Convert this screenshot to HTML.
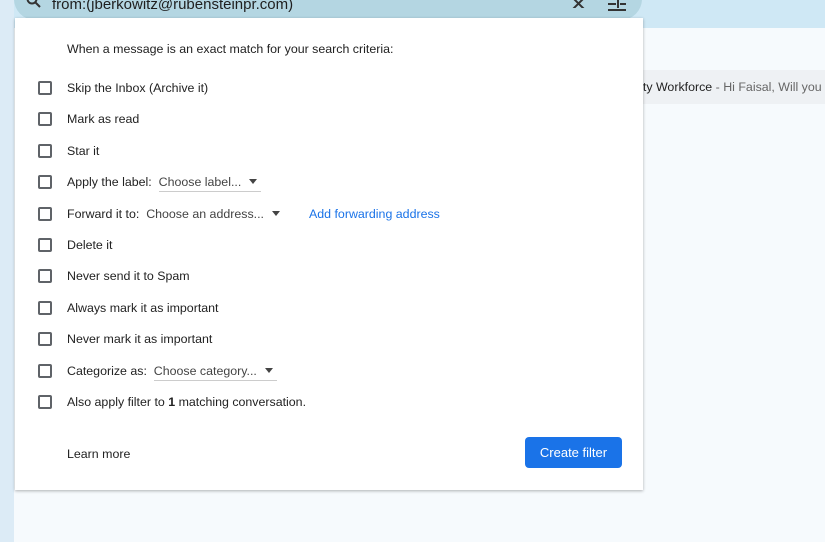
<!DOCTYPE html><html><head><style>
body{margin:0;width:825px;height:542px;overflow:hidden;position:relative;background:#f6fafd;font-family:"Liberation Sans",sans-serif;font-size:12.4px;color:#222}
.top{position:absolute;left:0;top:0;width:825px;height:28px;background:#cfe8f5}
.strip{position:absolute;left:0;top:0;width:14px;height:542px;background:#dcebf6}
.search{position:absolute;left:14px;top:-22px;width:628px;height:42px;border-radius:21px;background:#b4d6e2}
.search span{position:absolute;left:38px;top:18px;font-size:15px;color:#1f1f1f}
.row{position:absolute;left:640px;top:70px;width:185px;height:34px;background:#eef1f4;font-size:12.4px;line-height:34px;white-space:nowrap;overflow:hidden;text-indent:-4px}
.panel{position:absolute;left:15px;top:18px;width:628px;height:472px;background:#fff;box-shadow:0 1px 3px rgba(0,0,0,.3)}
.it{position:absolute;left:52px;height:18px;line-height:18px;margin-top:1px}
.cb{position:absolute;left:23px;width:10px;height:10px;border:2px solid #5f6368;border-radius:2px}
.sel{display:inline-block;border-bottom:1px solid #ccc;color:#444;padding-right:4px}
.sel:after{content:"";display:inline-block;margin-left:8px;border:4px solid transparent;border-top:5px solid #444;vertical-align:-2px}
.btn{position:absolute;left:510px;top:419px;width:97px;height:31px;background:#1a73e8;color:#fff;border-radius:4px;text-align:center;line-height:31px;font-size:13px}
</style></head><body>
<div class="top"></div><div class="strip"></div>
<div class="search"><svg style="position:absolute;left:12px;top:16px" width="16" height="16"><circle cx="6" cy="5" r="4.5" stroke="#333" stroke-width="2" fill="none"/><path d="M9 8l5 5" stroke="#333" stroke-width="2"/></svg><span>from:(jberkowitz@rubensteinpr.com)</span>
<svg style="position:absolute;left:558px;top:20px" width="14" height="10"><path d="M1 0l11 11M12 0L1 11" stroke="#333" stroke-width="2"/></svg>
<svg style="position:absolute;left:594px;top:20px" width="18" height="14"><path d="M0 6h8M12 6h6M10 2v8M0 12h18" stroke="#333" stroke-width="2"/></svg></div>
<div class="row">rity Workforce <span style="color:#666">- Hi Faisal, Will you</span></div>
<div class="panel">
<div class="it" style="top:21px">When a message is an exact match for your search criteria:</div>
<div class="cb" style="top:63px"></div><div class="it" style="top:60px">Skip the Inbox (Archive it)</div>
<div class="cb" style="top:94px"></div><div class="it" style="top:91px">Mark as read</div>
<div class="cb" style="top:126px"></div><div class="it" style="top:123px">Star it</div>
<div class="cb" style="top:157px"></div><div class="it" style="top:154px">Apply the label: &nbsp;<span class="sel">Choose label...</span></div>
<div class="cb" style="top:189px"></div><div class="it" style="top:186px">Forward it to: &nbsp;<span class="sel" style="border:0">Choose an address...</span></div>
<div class="it" style="top:186px;left:294px;color:#1a73e8">Add forwarding address</div>
<div class="cb" style="top:220px"></div><div class="it" style="top:217px">Delete it</div>
<div class="cb" style="top:251px"></div><div class="it" style="top:248px">Never send it to Spam</div>
<div class="cb" style="top:283px"></div><div class="it" style="top:280px">Always mark it as important</div>
<div class="cb" style="top:314px"></div><div class="it" style="top:311px">Never mark it as important</div>
<div class="cb" style="top:346px"></div><div class="it" style="top:343px">Categorize as: &nbsp;<span class="sel">Choose category...</span></div>
<div class="cb" style="top:377px"></div><div class="it" style="top:374px">Also apply filter to <b>1</b> matching conversation.</div>
<div class="it" style="top:426px">Learn more</div>
<div class="btn">Create filter</div>
</div>
</body></html>
